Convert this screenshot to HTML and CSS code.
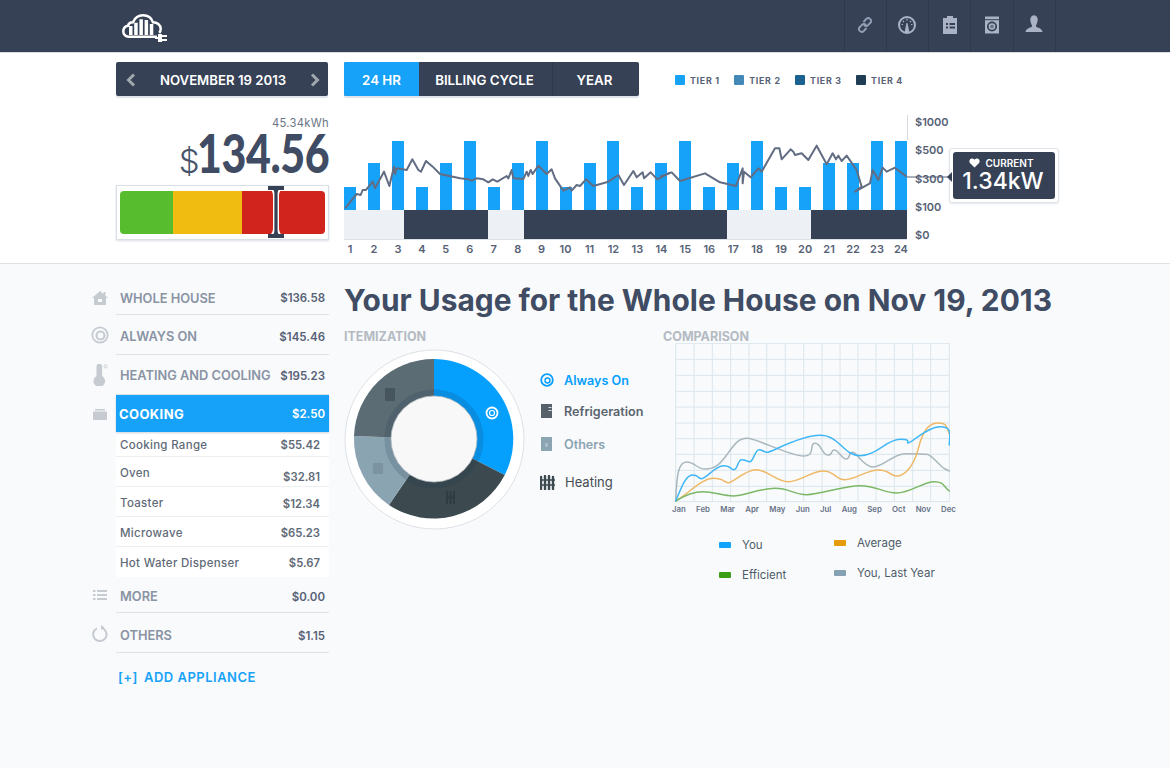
FILE: index.html
```html
<!DOCTYPE html>
<html lang="en">
<head>
<meta charset="utf-8">
<title>Home energy usage</title>
<link rel="stylesheet" href="styles.css">
</head>
<body>
<header class="topbar">
  <svg class="logo" viewBox="0 0 46 28" width="46" height="28">
    <path d="M35 22.700H6.500C3.500 22.700 1.300 20.500 1.300 17.500C1.300 14.500 3 12.300 6 11.800C6.500 9.500 8.500 8 11 8.200C13 3.500 17 1.300 21 1.300C25.500 1.300 29.500 3.800 31 8.300C35 8.300 38.700 10.800 38.700 15C38.700 16.500 38.200 17.800 37.200 18.800" fill="none" stroke="#fff" stroke-width="2.500"/>
    <path d="M7 12h3.500v9H7zM12.200 8.700h3.500V21h-3.500zM17.400 5.300h3.500V21h-3.500zM22.600 6h3.500v15h-3.500zM27.800 10h3.500v11h-3.500z" fill="#fff"/>
    <path d="M33 23h3v-3h4v1h5v2h-5v2h5v2h-5v1h-4v-3h-3z" fill="#fff"/>
  </svg>
  <nav class="topnav">
    <a class="navitem"><svg viewBox="0 0 20 20" width="20" height="20"><g fill="none" stroke="#939fb4" stroke-width="1.900" stroke-linecap="round"><path d="M9 6.500l2.500-2.800a2.400 2.400 0 0 1 3.400 0.100l.6.600a2.400 2.400 0 0 1-.1 3.400l-2.600 2.600a2.400 2.400 0 0 1-3.400-.1"/><path d="M11 13.500l-2.500 2.800a2.400 2.400 0 0 1-3.400-.1l-.6-.6a2.400 2.400 0 0 1 .1-3.400l2.600-2.600a2.400 2.400 0 0 1 3.400.1"/></g></svg></a>
    <a class="navitem"><svg viewBox="0 0 20 20" width="20" height="20"><circle cx="10" cy="10" r="8" fill="none" stroke="#a9b3c5" stroke-width="2"/><path d="M7.500 18l2-10h1l2 10z" fill="#a9b3c5"/><path d="M4.500 9.500h1.500M6 6l1 1M10 3.800v1.700M14 6l-1 1M15.500 9.500H14" stroke="#a9b3c5" stroke-width="1.200"/></svg></a>
    <a class="navitem"><svg viewBox="0 0 20 20" width="20" height="20"><path d="M3 3h4V1h6v2h4v16H3z" fill="#a9b3c5"/><path d="M6 8h2v2H6zM9.500 8H15v2H9.500zM6 11.500h2v2H6zM9.500 11.500H15v2H9.500z" fill="#364156"/></svg></a>
    <a class="navitem"><svg viewBox="0 0 20 20" width="20" height="20"><path d="M3 1.500h14v17H3z" fill="#a9b3c5"/><path d="M3 4.700h14" stroke="#364156"/><circle cx="10" cy="11.500" r="5" fill="#364156"/><circle cx="10" cy="11.500" r="3.300" fill="#a9b3c5"/><circle cx="10" cy="11.500" r="1.800" fill="#667287"/></svg></a>
    <a class="navitem"><svg viewBox="0 0 20 20" width="20" height="20"><path d="M6.500 6.500a3.800 4.500 0 1 1 7 0c-.4 2-1 3-1.500 3.800v1.200c1.500 1.500 6 1.500 6.500 5.500H1.500C2 13 6.500 13 8 11.500v-1.200c-.5-.8-1.100-1.800-1.500-3.800z" fill="#a9b3c5"/></svg></a>
  </nav>
</header>

<section class="summary">
  <div class="left-col">
    <div class="pager">
      <svg viewBox="0 0 12 14" width="12" height="14"><path d="M9 1.500L3.500 7 9 12.500" fill="none" stroke="#a0a7ad" stroke-width="3"/></svg>
      <span>NOVEMBER 19 2013</span>
      <svg viewBox="0 0 12 14" width="12" height="14"><path d="M3 1.500L8.500 7 3 12.500" fill="none" stroke="#a0a7ad" stroke-width="3"/></svg>
    </div>
    <div class="kwh">45.34kWh</div>
    <div class="cost"><span class="dollar">$</span><span class="amount">134.56</span></div>
    <div class="meter">
      <div class="meter-bar"><i class="m-green"></i><i class="m-yellow"></i><i class="m-red"></i></div>
      <svg class="marker" viewBox="0 0 20 54" width="20" height="54">
        <path d="M3 4c2 0 4 3 4 7v32c0 4-2 7-4 7h14c-2 0-4-3-4-7V11c0-4 2-7 4-7z" fill="#fff"/>
        <path d="M2 1h16v4h-5.500c-.5 1-.9 2-.9 4v36c0 2 .4 3 .9 4H18v4H2v-4h5.500c.5-1 .9-2 .9-4V9c0-2-.4-3-.9-4H2z" fill="#364156"/>
      </svg>
    </div>
  </div>

  <div class="right-col">
    <div class="controls">
      <div class="tabs">
        <a class="tab tab-active">24 HR</a>
        <a class="tab tab-billing">BILLING CYCLE</a>
        <a class="tab tab-year">YEAR</a>
      </div>
      <ul class="tiers">
        <li><i class="t1"></i>TIER 1</li>
        <li><i class="t2"></i>TIER 2</li>
        <li><i class="t3"></i>TIER 3</li>
        <li><i class="t4"></i>TIER 4</li>
      </ul>
    </div>
    <div class="chart-row">
      <div class="plot">
        <div class="bars">
          <i class="s"></i><i class="m"></i><i class="t"></i><i class="s"></i><i class="m"></i><i class="t"></i>
          <i class="s"></i><i class="m"></i><i class="t"></i><i class="s"></i><i class="m"></i><i class="t"></i>
          <i class="s"></i><i class="m"></i><i class="t"></i><i class="s"></i><i class="m"></i><i class="t"></i>
          <i class="s"></i><i class="s"></i><i class="m"></i><i class="m"></i><i class="t"></i><i class="t"></i>
        </div>
        <div class="band">
          <i class="light" style="flex-grow:60"></i><i class="dark" style="flex-grow:84"></i>
          <i class="light" style="flex-grow:36"></i><i class="dark" style="flex-grow:203"></i>
          <i class="light" style="flex-grow:84"></i><i class="dark" style="flex-grow:96"></i>
        </div>
        <div class="hours">
          <span>1</span><span>2</span><span>3</span><span>4</span><span>5</span><span>6</span>
          <span>7</span><span>8</span><span>9</span><span>10</span><span>11</span><span>12</span>
          <span>13</span><span>14</span><span>15</span><span>16</span><span>17</span><span>18</span>
          <span>19</span><span>20</span><span>21</span><span>22</span><span>23</span><span>24</span>
        </div>
      </div>
      <div class="axis"><span>$1000</span><span>$500</span><span>$300</span><span>$100</span><span>$0</span></div>
      <svg class="overlay" viewBox="344 112 720 150" width="720" height="150">
        <path d="M907.500 115V140" stroke="#d5d9df" stroke-width="1"/>
        <path d="M907 177H948" stroke="#566176" stroke-width="1"/>
        <g transform="translate(340 100) scale(.33333)" fill="none" stroke="#626d84" stroke-width="6" stroke-linejoin="round">
          <polyline points="15,325 50,282 62,285 68,270 78,270 98,245 105,265 132,215 148,258 162,200 165,222 170,205 200,210 217,178 235,210 243,215 258,183 278,200 300,222 360,235 385,238 395,242 410,235 430,238 445,247 458,238 472,245 500,228 505,235 515,210 520,235 550,237 560,215 565,228 572,210 578,222 595,197 620,222 635,208 645,235 670,272 690,262 695,272 710,255 720,258 738,238 760,258 805,245 835,225 852,255 880,213 890,232 908,217 912,235 932,217 952,238 990,218"/>
        </g>
        <g transform="translate(660 0) scale(.33333)" fill="none" stroke="#626d84" stroke-width="6" stroke-linejoin="round">
          <polyline points="0,530 35,517 60,543 135,520 180,547 228,558 248,505 248,550 252,515 272,532 295,505 305,515 345,445 358,445 365,478 392,448 400,455 405,465 425,460 445,480 470,437 500,493 518,460 528,478 535,467 545,483 560,467 590,510 605,560 585,575 630,550 638,510 655,540 668,503 680,515 705,503 720,515 740,530"/>
        </g>
      </svg>
      <div class="tooltip">
        <div class="tooltip-in">
          <div class="tip-label"><svg viewBox="0 0 12 11" width="11" height="10"><path d="M6 10.500L1 5.500C-.5 3.500.8.500 3.300.500 4.500.500 5.500 1.200 6 2 6.500 1.200 7.500.500 8.700.500 11.200.500 12.500 3.500 11 5.500z" fill="#fff"/></svg>CURRENT</div>
          <div class="tip-value">1.34kW</div>
        </div>
      </div>
    </div>
  </div>
</section>

<main class="main">
  <aside class="sidebar">
    <div class="row row-whole">
      <span class="ico"><svg viewBox="0 0 16 16" width="16" height="16"><path d="M8 1l3.500 3V2h2v4L16 8h-2v7H2V8H0z" fill="#c6cbd2"/><path d="M6 9h4v3H6z" fill="#f9fafc"/></svg></span>
      <div class="row-body"><span>WHOLE HOUSE</span><b>$136.58</b></div>
    </div>
    <div class="row row-always">
      <span class="ico"><svg viewBox="0 0 18 18" width="18" height="18"><circle cx="9" cy="9" r="7.700" fill="none" stroke="#c6cbd2" stroke-width="1.800"/><circle cx="9.500" cy="9.500" r="4" fill="none" stroke="#c6cbd2" stroke-width="2.200"/></svg></span>
      <div class="row-body"><span>ALWAYS ON</span><b>$145.46</b></div>
    </div>
    <div class="row">
      <span class="ico"><svg viewBox="0 0 16 22" width="16" height="22"><path d="M4.500 2.500a2.800 2.800 0 0 1 5.600 0v9.500a5.800 5.800 0 1 1-5.600 0z" fill="#c6cbd2"/><circle cx="13.500" cy="2.500" r="1.500" fill="none" stroke="#c6cbd2"/></svg></span>
      <div class="row-body"><span>HEATING AND COOLING</span><b>$195.23</b></div>
    </div>
    <div class="row row-active">
      <span class="ico"><svg viewBox="0 0 16 12" width="16" height="12"><path d="M1 3.500h14V12H1zM3 1h10v1.500H3z" fill="#c6cbd2"/></svg></span>
      <div class="row-body"><span>COOKING</span><b>$2.50</b></div>
    </div>
    <ul class="subs">
      <li class="sub-first"><span>Cooking Range</span><b>$55.42</b></li>
      <li><span>Oven</span><b class="low-5">$32.81</b></li>
      <li><span>Toaster</span><b class="low-2">$12.34</b></li>
      <li><span>Microwave</span><b>$65.23</b></li>
      <li><span>Hot Water Dispenser</span><b>$5.67</b></li>
    </ul>
    <div class="row row-more">
      <span class="ico"><svg viewBox="0 0 16 12" width="16" height="12"><path d="M1 1h2.500v2H1zM5 1h10v2H5zM1 5h2.500v2H1zM5 5h10v2H5zM1 9h2.500v2H1zM5 9h10v2H5z" fill="#c6cbd2"/></svg></span>
      <div class="row-body"><span>MORE</span><b>$0.00</b></div>
    </div>
    <div class="row row-others">
      <span class="ico"><svg viewBox="0 0 18 18" width="18" height="18"><path d="M11.500 4.200a6.700 6.700 0 1 1-5.500 .100" fill="none" stroke="#c6cbd2" stroke-width="2"/><path d="M10 1l3.500 2.500L10 6z" fill="#c6cbd2"/></svg></span>
      <div class="row-body"><span>OTHERS</span><b>$1.15</b></div>
    </div>
    <a class="add"><span>[+]</span>ADD APPLIANCE</a>
  </aside>

  <div class="content">
    <h1>Your Usage for the Whole House on Nov 19, 2013</h1>
    <div class="panels">
      <section class="itemization">
        <h2>ITEMIZATION</h2>
        <div class="item-body">
          <svg class="donut" viewBox="344 349 181 181" width="181" height="181">
            <circle cx="434.500" cy="439.500" r="89.500" fill="#fff" stroke="#dde2e6"/>
            <path d="M434 439V359A80 80 0 0 1 504.700 475z" fill="#059ffd"/>
            <path d="M434 439L504.700 475A80 80 0 0 1 389 505z" fill="#3c4a50"/>
            <path d="M434 439L389 505A80 80 0 0 1 354 436z" fill="#8ba4b2"/>
            <path d="M434 439L354 436A80 80 0 0 1 434 359z" fill="#5b6c74"/>
            <circle cx="434" cy="439" r="46" fill="none" stroke="#17334a" stroke-opacity=".16" stroke-width="7"/>
            <circle cx="434" cy="439" r="43" fill="#f8f8f8" stroke="#b9bec0" stroke-width=".8"/>
            <circle cx="492" cy="413" r="5.500" fill="none" stroke="#fff" stroke-width="1.800"/>
            <circle cx="492" cy="413" r="2.500" fill="none" stroke="#fff" stroke-width="1.200"/>
            <path d="M385 388h10v13h-10z" fill="#46555e"/>
            <path d="M373 463h10v11h-10z" fill="#7c94a2"/>
            <path d="M446 497.500h9M447 491v13M450.500 491v13M454 491v13" stroke="#303c42" stroke-width="2"/>
          </svg>
          <ul class="item-legend">
            <li class="lg-on"><svg viewBox="0 0 14 14" width="14" height="14"><circle cx="7" cy="7" r="5.800" fill="none" stroke="#059ffd" stroke-width="1.800"/><circle cx="7.500" cy="7.500" r="2.500" fill="none" stroke="#059ffd" stroke-width="1.400"/></svg>Always On</li>
            <li class="lg-fridge"><svg viewBox="0 0 14 14" width="14" height="14"><path d="M1 0h11v14H1z" fill="#55606b"/><path d="M8.500 3.500h3M8.500 6.500h3" stroke="#f9fafc" stroke-width=".8"/></svg>Refrigeration</li>
            <li class="lg-others"><svg viewBox="0 0 14 14" width="14" height="14"><path d="M1 0h11v14H1z" fill="#8ba4b2"/><path d="M5 6h3v4H5z" fill="#a9bdc8"/></svg>Others</li>
            <li class="lg-heat"><svg viewBox="0 0 15 15" width="15" height="15"><path d="M1 2v12M5 1v14M9 1v14M13 2v12" stroke="#3c4a50" stroke-width="2.400" stroke-linecap="round"/><path d="M0 5h15M0 10h15" stroke="#3c4a50" stroke-width="1.400"/></svg>Heating</li>
          </ul>
        </div>
      </section>
      <section class="comparison">
        <h2>COMPARISON</h2>
        <svg class="compare" viewBox="674 343 276 161" width="276" height="161">
          <g transform="translate(660 335) scale(.33333)" fill="none">
            <path stroke="#dbe6ec" stroke-width="3" d="M47 25V500M102 25V500M157 25V500M212 25V500M267 25V500M320 25V500M376 25V500M431 25V500M486 25V500M540 25V500M594 25V500M648 25V500M703 25V500M758 25V500M812 25V500M868 25V500M47 25H868M47 73H868M47 121H868M47 169H868M47 216H868M47 264H868M47 311H868M47 358H868M47 406H868M47 454H868M47 500H868"/>
            <g stroke-width="4.500" stroke-linecap="round">
              <path stroke="#a9b8be" d="M47 498C50 420 55 381 80 381S110 402 135 402S175 395 200 360S235 310 262 310S390 363 430 363S445 325 465 325S485 360 503 360S510 345 523 345S545 372 558 372S565 352 578 352S610 396 640 396S700 356 735 356S785 358 800 358S840 395 855 402L868 408"/>
              <path stroke="#efb865" d="M47 498C80 480 125 430 160 430S190 443 205 443S255 404 288 404S350 440 385 440S455 408 490 408S525 434 555 434S620 405 655 405S690 423 710 423S760 400 775 340S810 264 835 264S860 275 868 297"/>
              <path stroke="#7ab866" d="M47 498C75 480 100 470 130 470S190 483 220 483S300 460 345 460S400 479 440 479S550 452 600 452S670 474 710 474S790 440 822 440S850 455 868 468"/>
              <path stroke="#3fb7f7" d="M47 498C60 470 75 420 97 420S110 431 125 431S165 392 190 392S210 404 222 404S232 374 245 374S260 380 270 380S285 344 297 344S310 352 322 352S420 301 480 301S550 362 600 362S680 313 720 313S735 324 745 324S800 275 840 275S868 300 868 330"/>
            </g>
          </g>
        </svg>
        <div class="months"><span>Jan</span><span>Feb</span><span>Mar</span><span>Apr</span><span>May</span><span>Jun</span><span>Jul</span><span>Aug</span><span>Sep</span><span>Oct</span><span>Nov</span><span>Dec</span></div>
        <ul class="compare-legend">
          <li><i class="c-you"></i>You</li>
          <li class="raise"><i class="c-avg"></i>Average</li>
          <li><i class="c-eff"></i>Efficient</li>
          <li class="raise"><i class="c-last"></i>You, Last Year</li>
        </ul>
      </section>
    </div>
  </div>
</main>
</body>
</html>
```
FILE: styles.css
```css
* { box-sizing: border-box; }
html, body { margin: 0; padding: 0; }
body {
  width: 1170px;
  height: 768px;
  overflow: hidden;
  background: #f9fafc;
  color: #3f4c63;
  font-family: Inter, "Open Sans", "Liberation Sans", sans-serif;
}
ul { list-style: none; margin: 0; padding: 0; }
h1, h2 { margin: 0; }
svg { display: block; }

/* top bar */
.topbar {
  height: 52px;
  background: #364156;
  display: flex;
  justify-content: space-between;
  padding: 0 114px 0 122px;
  box-shadow: 0 1px 0 #d9dde3;
  position: relative;
}
.logo { margin-top: 14px; }
.topnav { display: flex; border-left: 1px solid #2f394c; }
.navitem {
  width: 42.300px;
  display: flex;
  justify-content: center;
  padding-top: 15px;
  border-right: 1px solid #2f394c;
}

/* summary */
.summary {
  height: 212px;
  background: #fff;
  border-bottom: 1px solid #dde1e6;
  display: flex;
  padding: 10px 0 0 116px;
}
.left-col { width: 213px; }
.pager {
  width: 212px;
  height: 34px;
  background: #364156;
  border-radius: 2px;
  box-shadow: 0 2px 1px #dfe4ea;
  display: flex;
  align-items: center;
  justify-content: space-between;
  padding: 1px 7px 0 9px;
  color: #fff;
  font-size: 13.200px;
  font-weight: 600;
}
.kwh {
  margin-top: 20px;
  text-align: right;
  font-size: 11.200px;
  line-height: 14px;
  color: #6b7585;
  letter-spacing: .3px;
}
.cost {
  display: flex;
  justify-content: flex-end;
  align-items: baseline;
  height: 47px;
  line-height: 46px;
  margin-bottom: 8px;
}
.dollar { font-size: 33px; font-weight: 300; margin-right: -4px; color: #46536a; }
.amount {
  display: inline-block;
  margin-left: -30px;
  transform: scaleX(.81);
  transform-origin: right center;
  font-family: Lato, sans-serif;
  font-size: 53px;
  font-weight: 900;
  letter-spacing: -.5px;
}
.meter {
  position: relative;
  height: 55px;
  background: #fff;
  border: 1px solid #dadfe5;
  box-shadow: 0 1px 2px #d9dee5;
  padding: 5px 3px;
}
.meter-bar {
  display: flex;
  height: 43px;
  border-radius: 4px;
  overflow: hidden;
}
.m-green { width: 53px; background: #57bd2e; }
.m-yellow { width: 69px; background: #f0bc12; }
.m-red { flex: 1; background: #d0241c; }
.marker { position: absolute; left: 149px; top: -1px; }

.right-col { margin-left: 15px; }
.controls { display: flex; height: 35px; }
.tabs {
  display: flex;
  width: 295px;
  height: 34px;
  background: #364156;
  border-radius: 2px;
  overflow: hidden;
  box-shadow: 0 2px 1px #dfe4ea;
  color: #fff;
  font-size: 13.300px;
  font-weight: 600;
}
.tab { display: flex; align-items: center; justify-content: center; padding-top: 1px; }
.tab-active { width: 75px; background: #17a2fa; }
.tab-billing { width: 134px; border-right: 1px solid #2e3848; padding-right: 2px; }
.tab-year { flex: 1; padding-right: 3px; }
.tiers { display: flex; margin-left: 36px; padding-top: 13px; }
.tiers li {
  display: flex;
  align-items: center;
  height: 10px;
  margin-right: 14.300px;
  font-size: 8.800px;
  font-weight: 700;
  letter-spacing: .75px;
  color: #566176;
}
.tiers i { width: 10px; height: 10px; border-radius: 1px; margin-right: 5px; }
.t1 { background: #17a2fa; }
.t2 { background: #4388b6; }
.t3 { background: #1a6391; }
.t4 { background: #1f3d54; }

.chart-row {
  position: relative;
  display: flex;
  margin-top: 15px;
}
.plot { width: 563px; padding-top: 29px; }
.bars {
  display: flex;
  justify-content: space-between;
  align-items: flex-end;
  height: 69px;
}
.bars i { width: 12px; background: #17a2fa; }
.bars .s { height: 23px; }
.bars .m { height: 47px; }
.bars .t { height: 69px; }
.band { display: flex; height: 30px; border-bottom: 1px solid #dde2e8; }
.band i { flex: 0 1 0; }
.band .light { background: #edf1f5; }
.band .dark { background: #364156; }
.hours {
  display: flex;
  justify-content: space-between;
  margin-top: 1px;
  font-size: 11px;
  font-weight: 600;
  line-height: 16px;
  color: #566176;
}
.hours span { width: 12px; display: flex; justify-content: center; white-space: nowrap; }
.axis {
  display: flex;
  flex-direction: column;
  justify-content: space-between;
  height: 131px;
  margin: 1px 0 0 8px;
  font-size: 11px;
  font-weight: 600;
  line-height: 18px;
  color: #566176;
}
.overlay { position: absolute; left: 0; top: 0; pointer-events: none; }
.tooltip {
  position: absolute;
  left: 605px;
  top: 36px;
  width: 110px;
  height: 55px;
  padding: 3px;
  background: #fff;
  border: 1px solid #dfe3ea;
  border-radius: 3px;
  box-shadow: 0 1px 2px #e3e7ec;
}
.tooltip::before {
  content: "";
  position: absolute;
  left: -3px;
  top: 23px;
  border: 5px solid transparent;
  border-left: 0;
  border-right-color: #364156;
}
.tooltip-in {
  height: 47px;
  background: #364156;
  border-radius: 3px;
  color: #fff;
  text-align: center;
  padding: 5px 2px 0 0;
}
.tip-label {
  display: flex;
  justify-content: center;
  align-items: center;
  gap: 5px;
  padding-right: 3px;
  font-size: 10px;
  font-weight: 600;
  line-height: 12px;
}
.tip-value { font-size: 23px; font-weight: 500; line-height: 25px; }

/* main */
.main { display: flex; padding-left: 90px; }
.sidebar { width: 239px; padding-top: 16px; }
.row { display: flex; height: 40px; }
.row-whole { height: 35px; }
.row-more { height: 36px; }
.row-active { height: 37px; }
.ico { width: 26px; display: flex; justify-content: center; align-items: center; padding-right: 6px; flex: none; }
.row-body {
  flex: 1;
  display: flex;
  justify-content: space-between;
  align-items: center;
  padding: 2px 4px 0 4px;
  border-bottom: 1px solid #dde2e8;
  font-size: 12.800px;
  font-weight: 600;
  color: #8993a3;
}
.row-always .row-body, .row-more .row-body { padding-top: 4px; }
.row-others .row-body { padding-top: 6px; }
.row-body b { font-size: 11.500px; font-weight: 600; color: #566176; }
.row-active .row-body {
  background: #17a2fa;
  color: #fff;
  border-bottom: 0;
  box-shadow: 0 1px 2px #c9d3dc;
  padding: 0 4px 0 3px;
}
.row-active .row-body span { font-size: 13px; font-weight: 700; letter-spacing: .4px; }
.row-active .row-body b { color: #fff; }
.subs { margin-left: 26px; background: #fff; }
.subs li {
  height: 30px;
  display: flex;
  justify-content: space-between;
  align-items: center;
  padding: 2px 9px 0 4px;
  border-bottom: 1px solid #ecf0f3;
  font-size: 11.500px;
  font-weight: 500;
  letter-spacing: .3px;
  color: #5f6a78;
}
.subs li:last-child { border-bottom: 0; }
.subs .sub-first { height: 25px; }
.subs b { font-weight: 600; letter-spacing: 0; font-size: 11.300px; }
.subs .low-5 { padding-top: 8px; }
.subs .low-2 { padding-top: 2px; }
.add {
  display: flex;
  gap: 6px;
  margin: 16px 0 0 28px;
  font-size: 13px;
  font-weight: 600;
  line-height: 16px;
  letter-spacing: .5px;
  color: #17a2fa;
}

.content { margin-left: 15px; padding-top: 18px; }
h1 { font-size: 29.900px; font-weight: 700; line-height: 36px; white-space: nowrap; color: #3f4c63; }
.panels { display: flex; margin-top: 12px; }
h2 {
  font-size: 12.500px;
  font-weight: 700;
  line-height: 14px;
  color: #b4bac2;
}
.itemization { width: 319px; }
.item-body { display: flex; margin-top: 5px; }
.donut { flex: none; }
.item-legend { margin: 21px 0 0 15px; font-size: 12.600px; white-space: nowrap; }
.item-legend li { display: flex; align-items: center; gap: 10px; height: 20px; font-weight: 600; }
.lg-on { color: #059ffd; }
.lg-fridge { margin-top: 11px; color: #59646e; }
.lg-others { margin-top: 13px; color: #8ba4b2; }
.lg-heat { margin-top: 18px; color: #444d52; }
.item-legend .lg-heat { font-weight: 400; font-size: 13px; }
.comparison { width: 300px; }
.compare { margin: -1px 0 0 11px; }
.months {
  display: flex;
  justify-content: space-between;
  width: 284px;
  margin: 0 0 0 9px;
  font-size: 7.800px;
  font-weight: 600;
  line-height: 11px;
  color: #667287;
}
.compare-legend {
  display: grid;
  grid-template-columns: 115px 1fr;
  row-gap: 10px;
  margin: 20px 0 0 56px;
  font-size: 11.500px;
  color: #4e5c68;
}
.compare-legend li { display: flex; align-items: center; height: 20px; gap: 11px; }
.compare-legend .raise { margin-top: -2px; }
.compare-legend i { width: 12px; height: 6px; border-radius: 1px; }
.c-you { background: #12a4fb; }
.c-avg { background: #e69b0a; }
.c-eff { background: #3b9e16; }
.c-last { background: #86a2b2; }
```
